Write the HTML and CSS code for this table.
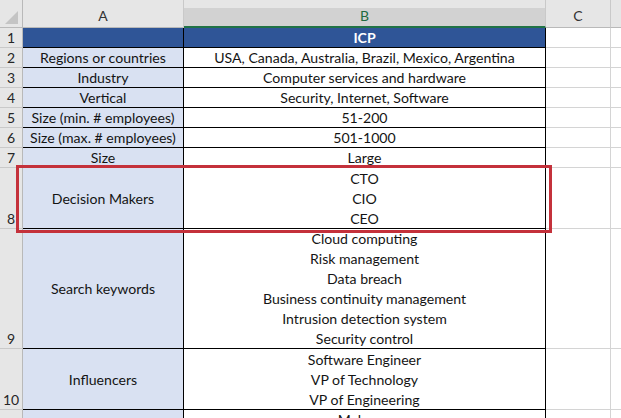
FILE: index.html
```html
<!DOCTYPE html>
<html>
<head>
<meta charset="utf-8">
<link rel="stylesheet" href="styles.css">
</head>
<body>
<div class="sheet">
  <div class="hdr corner"><span class="tri"></span></div>
  <div class="hdr col">A</div>
  <div class="hdr col sel">B</div>
  <div class="hdr col">C</div>
  <div class="hdr col last"></div>

  <div class="rn">1</div>
  <div class="c a head"></div>
  <div class="c b head">ICP</div>
  <div class="g"></div><div class="g last"></div>

  <div class="rn">2</div>
  <div class="c a">Regions or countries</div>
  <div class="c b">USA, Canada, Australia, Brazil, Mexico, Argentina</div>
  <div class="g"></div><div class="g last"></div>

  <div class="rn">3</div>
  <div class="c a">Industry</div>
  <div class="c b">Computer services and hardware</div>
  <div class="g"></div><div class="g last"></div>

  <div class="rn">4</div>
  <div class="c a">Vertical</div>
  <div class="c b">Security, Internet, Software</div>
  <div class="g"></div><div class="g last"></div>

  <div class="rn">5</div>
  <div class="c a">Size (min. # employees)</div>
  <div class="c b">51-200</div>
  <div class="g"></div><div class="g last"></div>

  <div class="rn">6</div>
  <div class="c a">Size (max. # employees)</div>
  <div class="c b">501-1000</div>
  <div class="g"></div><div class="g last"></div>

  <div class="rn">7</div>
  <div class="c a">Size</div>
  <div class="c b">Large</div>
  <div class="g"></div><div class="g last"></div>

  <div class="rn">8</div>
  <div class="c a">Decision Makers</div>
  <div class="c b"><span>CTO</span><span>CIO</span><span>CEO</span></div>
  <div class="g"></div><div class="g last"></div>

  <div class="rn">9</div>
  <div class="c a">Search keywords</div>
  <div class="c b"><span>Cloud computing</span><span>Risk management</span><span>Data breach</span><span>Business continuity management</span><span>Intrusion detection system</span><span>Security control</span></div>
  <div class="g"></div><div class="g last"></div>

  <div class="rn">10</div>
  <div class="c a">Influencers</div>
  <div class="c b"><span>Software Engineer</span><span>VP of Technology</span><span>VP of Engineering</span></div>
  <div class="g"></div><div class="g last"></div>

  <div class="rn"></div>
  <div class="c a top"></div>
  <div class="c b top"><span>Malware</span></div>
  <div class="g"></div><div class="g last"></div>

  <div class="highlight"></div>
</div>
</body>
</html>
```
FILE: styles.css
```css
html, body {
  margin: 0;
  padding: 0;
  background: #ffffff;
  overflow: hidden;
}
.sheet {
  position: relative;
  display: grid;
  grid-template-columns: 23px 161px 362px 65px 1fr;
  grid-template-rows: 28px repeat(7, 20px) 61px 120px 61px 60px;
  font-family: Lato, "Open Sans", sans-serif;
  font-size: 14.1px;
  color: #141414;
  width: 621px;
  height: 418px;
  overflow: hidden;
}
.sheet > div {
  box-sizing: border-box;
}
.hdr {
  background: #e6e6e6;
  border-right: 1px solid #c9c9c9;
  border-bottom: 1px solid #b9b9b9;
  display: flex;
  align-items: flex-end;
  justify-content: center;
  padding-bottom: 3px;
  color: #333;
  font-size: 14px;
}
.hdr.corner {
  position: relative;
  border-right: 1px solid #b9b9b9;
}
.tri {
  position: absolute;
  right: 4px;
  bottom: 3px;
  width: 0;
  height: 0;
  border-left: 13px solid transparent;
  border-bottom: 13px solid #c4c4c4;
}
.hdr.sel {
  background: linear-gradient(#e6e6e6 0 8px, #d2d2d2 8px);
  border-bottom: 2px solid #217346;
  color: #1e6b40;
  padding-bottom: 2px;
}
.hdr.last { border-right: none; }
.rn {
  background: #e6e6e6;
  border-right: 1px solid #b9b9b9;
  border-bottom: 1px solid #c9c9c9;
  color: #262626;
  font-size: 14px;
  display: flex;
  align-items: flex-end;
  justify-content: center;
  line-height: 19px;
}
.c {
  border-right: 1px solid #000;
  border-bottom: 1px solid #000;
  display: flex;
  flex-direction: column;
  align-items: center;
  justify-content: center;
  line-height: 20px;
  padding-top: 1px;
  white-space: nowrap;
}
.c.a { background: #d9e1f2; }
.c.b { background: #ffffff; }
.c.head {
  background: #2f5597;
  color: #ffffff;
  font-weight: bold;
}
.c.top { justify-content: flex-start; padding-top: 0; }
.c span { display: block; height: 20px; }
.g {
  border-right: 1px solid #d4d4d4;
  border-bottom: 1px solid #d4d4d4;
}
.g.last { border-right: none; }
.highlight {
  position: absolute;
  left: 16px;
  top: 165px;
  width: 536px;
  height: 68px;
  border: 3px solid #c4313b;
  box-sizing: border-box;
}
```
